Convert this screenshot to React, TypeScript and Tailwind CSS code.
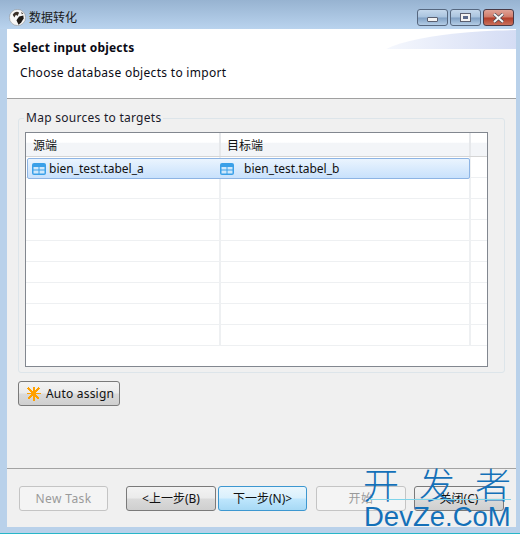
const font = { fontFamily: '"Noto Sans", "Noto Sans CJK SC", sans-serif' };

const Logo = () => (
  <svg width="17" height="17" viewBox="0 0 16 16">
    <circle cx="8" cy="8" r="7.6" fill="#f6f6f6" stroke="#8a8a8a" strokeWidth="0.5" />
    <path d="M3.5 5.5C5 2.5 8 2 9.5 3.5L8 6.5 6.5 5.5 5 8Z" fill="#3a3028" />
    <path d="M9.5 7L13.5 6l.3 3-2.3 3.8L9 14.8 7 10.5Z" fill="#1f1a16" />
    <path d="M11.5 2.5l2 2-1.5 .5Z" fill="#4a4038" />
  </svg>
);

const TableIcon = () => (
  <svg width="14" height="12" viewBox="0 0 14 12" className="shrink-0">
    <rect x="0" y="0" width="14" height="12" rx="2" fill="#3aa0e8" />
    <rect x="1.5" y="4" width="5" height="2.5" fill="#cfe8fb" />
    <rect x="7.5" y="4" width="5" height="2.5" fill="#cfe8fb" />
    <rect x="1.5" y="7.5" width="5" height="3" fill="#cfe8fb" />
    <rect x="7.5" y="7.5" width="5" height="3" fill="#cfe8fb" />
  </svg>
);

const AutoIcon = () => (
  <svg width="15" height="15" viewBox="0 0 15 15" className="shrink-0" shapeRendering="crispEdges">
    <path d="M7.5 0.5v14M2 2l11 11M13 2L2 13" stroke="#ffa000" strokeWidth="2" fill="none" />
    <path d="M0.5 7.5h14" stroke="#ffa000" strokeWidth="1" fill="none" />
  </svg>
);

function WinButton({ kind }: { kind: 'min' | 'max' | 'close' }) {
  if (kind === 'close') {
    return (
      <div className="w-[31px] h-[17px] rounded-[3px] border border-[#4a3a46] bg-[linear-gradient(#e0a296,#cf7a68_48%,#b13c28_52%,#c9705c)] flex items-center justify-center">
        <svg width="13" height="10" viewBox="0 0 13 10">
          <path d="M2 1l9 8M11 1L2 9" stroke="#4a4a55" strokeWidth="3.4" />
          <path d="M2 1l9 8M11 1L2 9" stroke="#f6f6f6" strokeWidth="2" />
        </svg>
      </div>
    );
  }
  return (
    <div className="w-[31px] h-[17px] rounded-[3px] border border-[#56677f] bg-[linear-gradient(#c5d8ec,#a9c3de_48%,#7f9fc3_52%,#b4cde6)] flex items-center justify-center">
      {kind === 'min' ? (
        <div className="w-[11px] h-[5px] mt-[3px] bg-[#f2f2f2] border border-[#5a5f70] rounded-[1px]" />
      ) : (
        <div className="w-[11px] h-[9px] bg-[#f2f2f2] border border-[#5a5f70] flex items-center justify-center">
          <div className="w-[5px] h-[3px] bg-[#5a6a8c]" />
        </div>
      )}
    </div>
  );
}

function FooterButton({ label, type, width }: { label: string; type: 'normal' | 'default' | 'disabled'; width: string }) {
  const look = {
    normal: 'border-[#7a7a7a] bg-[linear-gradient(#f3f3f3,#ebebeb_48%,#dadada_52%,#cfcfcf)] text-[#111]',
    default: 'border-[#3c97d0] bg-[linear-gradient(#eaf6fd,#d9f0fc_48%,#bee6fd_52%,#a7d9f5)] text-[#111]',
    disabled: 'border-[#c4c4c4] bg-[#f4f4f4] text-[#9a9a9a] tracking-[0.4px]',
  }[type];
  return (
    <div className={`h-[25px] rounded-[3px] border flex items-center justify-center text-[12px] ${width} ${look}`}>{label}</div>
  );
}

export default function App() {
  const rows = Array.from({ length: 9 });
  return (
    <div style={font} className="relative w-[520px] h-[534px] overflow-hidden bg-[#b9d1ea] flex flex-col text-[12px] text-[#111]">
      {/* Title bar */}
      <div className="h-[29px] shrink-0 bg-[linear-gradient(#97b3d1,#b9d3ee)] flex items-start pl-[9px] pr-[6px] pt-[9px]">
        <Logo />
        <span className="ml-[3px] text-[12px] leading-[18px] text-[#1a1a1a]">数据转化</span>
        <div className="ml-auto flex gap-[2px]">
          <WinButton kind="min" />
          <WinButton kind="max" />
          <WinButton kind="close" />
        </div>
      </div>

      <div className="ml-[7px] mr-[4px] h-[498px] bg-[#f0f0f0] flex flex-col">
        {/* Wizard header */}
        <div className="relative h-[70px] shrink-0 bg-white border-b border-[#a0a0a0] overflow-hidden">
          <div className="absolute right-0 top-0 w-[140px] h-[20px] overflow-hidden">
            <div className="absolute left-0 top-[1px] w-[300px] h-[60px] rounded-[50%] bg-[linear-gradient(90deg,#f8fafe,#d4dcf4_47%)]" />
          </div>
          <div className="pl-[6px] pt-[10px] text-[12px] font-bold leading-[18px] tracking-[0.2px] text-[#0a0a14]">Select input objects</div>
          <div className="pl-[13px] pt-[7px] text-[12px] leading-[18px] tracking-[0.3px] text-[#0a0a14]">Choose database objects to import</div>
        </div>

        {/* Group */}
        <div className="relative ml-[11px] mr-[11px] mt-[19px] h-[255px] shrink-0 rounded-[3px] border border-[#dde5ea] px-[6px] pt-[13px]">
          <span className="absolute left-[5px] -top-[9px] bg-[#f0f0f0] px-[2px] text-[12px] leading-[16px] tracking-[0.27px] text-[#1a1a2a]">Map sources to targets</span>
          <div className="h-[235px] w-[463px] border border-[#82878f] bg-white overflow-hidden">
            <div className="h-[24px] flex bg-[linear-gradient(#ffffff,#ffffff_40%,#f3f5f8_45%,#f3f5f8)] border-b border-[#d5d5d5]">
              <div className="w-[195px] border-r-2 border-[#e6e8eb] pl-[7px] leading-[25px]">源端</div>
              <div className="w-[250px] border-r-2 border-[#e6e8eb] pl-[6px] leading-[25px]">目标端</div>
            </div>
            <div className="relative">
              {rows.map((_, i) => (
                <div key={i} className="h-[21px] border-b border-[#eef0f2] flex">
                  <div className="w-[195px] border-r-2 border-[#eef0f2]" />
                  <div className="w-[250px] border-r-2 border-[#eef0f2]" />
                </div>
              ))}
              <div className="absolute left-[1px] top-[1px] w-[443px] h-[21px] rounded-[2px] border border-[#8db4e4] bg-[linear-gradient(#eaf4fe,#c8e1fc)] flex items-center text-[12px]">
                <div className="w-[192px] flex items-center pl-[4px] gap-[3px]">
                  <TableIcon />
                  <span>bien_test.tabel_a</span>
                </div>
                <div className="flex items-center">
                  <TableIcon />
                  <span className="ml-[10px]">bien_test.tabel_b</span>
                </div>
              </div>
            </div>
          </div>
        </div>

        {/* Auto assign */}
        <div className="ml-[11px] mt-[8px] w-[102px] h-[25px] shrink-0 rounded-[3px] border border-[#7a7a7a] bg-[linear-gradient(#f3f3f3,#ebebeb_48%,#dadada_52%,#cfcfcf)] flex items-center pl-[7px] gap-[5px]">
          <AutoIcon />
          <span className="text-[12px] tracking-[0.2px]">Auto assign</span>
        </div>

        {/* Footer */}
        <div className="mt-[62px] border-t border-[#a3a3a3] pt-[17px] pl-[12px] flex">
          <FooterButton label="New Task" type="disabled" width="w-[89px]" />
          <div className="w-[18px]" />
          <FooterButton label="<上一步(B)" type="normal" width="w-[90px]" />
          <div className="w-[2px]" />
          <FooterButton label="下一步(N)>" type="default" width="w-[89px]" />
          <div className="w-[9px]" />
          <FooterButton label="开始" type="disabled" width="w-[90px]" />
          <div className="w-[8px]" />
          <FooterButton label="关闭(C)" type="normal" width="w-[90px]" />
        </div>
      </div>
      <div className="mt-auto h-px bg-[#27b6c8]" />

      {/* Watermark */}
      <div className="absolute left-[363px] top-[463px] w-[148px] text-[#1470b8] pointer-events-none">
        <div style={{ fontFamily: '"Noto Sans CJK SC", sans-serif' }} className="flex justify-between font-light text-[36px] leading-[40px]">
          <span>开</span>
          <span>发</span>
          <span>者</span>
        </div>
        <div className="absolute left-[6px] right-0 top-[36px] h-px bg-[#7fd4ea]" />
        <div style={{ fontFamily: '"Liberation Sans", sans-serif' }} className="text-[27.5px] leading-[28px] whitespace-nowrap pl-[1px]">DevZe.CoM</div>
      </div>
    </div>
  );
}
